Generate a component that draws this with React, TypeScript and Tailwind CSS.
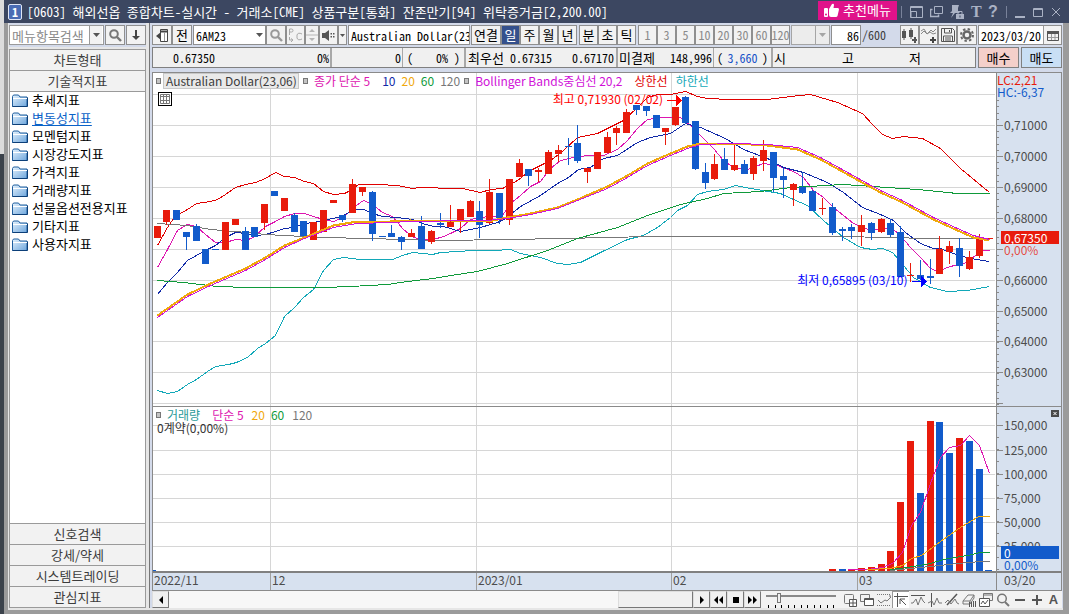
import { ReactNode } from "react";
import clsx from "clsx";

type Pt = [number, number];
// top, bottom, high, low, rising
type Candle = [number, number, number, number, 0 | 1];

const RED = "#e81b0c";
const BLUE = "#125bcb";

const candles: Candle[] = [
  [226, 238, 226, 238, 1], [210, 222, 210, 225, 1], [210, 220, 210, 220, 0], [232, 237, 232, 250, 0],
  [226, 241, 224, 241, 0], [249, 264, 249, 264, 0], [249, 250, 249, 250, 0], [222, 250, 222, 250, 1],
  [219, 225, 219, 225, 1], [231, 250, 227, 250, 0], [227, 237, 227, 237, 0], [204, 223, 204, 230, 1],
  [191, 196, 191, 196, 0], [198, 211, 198, 211, 1], [215, 232, 213, 232, 0], [221, 236, 221, 236, 0],
  [222, 240, 222, 240, 1], [210, 232, 210, 232, 1], [200, 203, 200, 203, 1], [215, 220, 215, 222, 0],
  [184, 213, 179, 213, 1], [187, 192, 187, 196, 1], [192, 234, 191, 241, 0], [236, 237, 236, 237, 0],
  [233, 237, 225, 237, 0], [237, 242, 236, 250, 0], [233, 237, 229, 237, 1], [226, 249, 216, 249, 0],
  [231, 242, 230, 244, 1], [223, 225, 213, 228, 0], [222, 227, 205, 227, 1], [209, 222, 209, 233, 1],
  [201, 217, 200, 217, 1], [211, 225, 201, 238, 0], [192, 223, 179, 224, 1], [193, 218, 193, 224, 0],
  [179, 220, 179, 225, 1], [163, 177, 159, 177, 1], [169, 176, 169, 186, 0], [170, 172, 168, 182, 1],
  [152, 174, 150, 174, 1], [150, 154, 145, 162, 1], [146, 147, 138, 165, 0], [143, 161, 125, 163, 0],
  [168, 172, 168, 183, 1], [152, 169, 152, 169, 1], [137, 153, 132, 153, 1], [128, 133, 126, 145, 1],
  [112, 133, 109, 133, 1], [105, 110, 105, 115, 0], [106, 111, 106, 116, 0], [115, 128, 115, 128, 0],
  [128, 132, 128, 145, 1], [107, 125, 107, 126, 1], [97, 123, 96, 124, 0], [121, 169, 121, 170, 0],
  [172, 183, 163, 189, 0], [164, 179, 154, 180, 1], [159, 170, 148, 170, 0], [165, 170, 143, 171, 1],
  [164, 174, 160, 174, 0], [158, 174, 156, 180, 1], [150, 161, 140, 171, 1], [152, 178, 152, 192, 0],
  [176, 180, 168, 198, 0], [184, 190, 183, 206, 1], [187, 193, 172, 194, 0], [191, 211, 190, 211, 0],
  [208, 209, 198, 215, 1], [207, 233, 203, 235, 0], [229, 231, 227, 241, 0], [227, 231, 224, 239, 0],
  [225, 232, 215, 246, 1], [223, 233, 222, 240, 0], [219, 232, 218, 233, 1], [223, 235, 219, 237, 0],
  [232, 277, 226, 277, 0], [275, 276, 263, 282, 1], [275, 279, 260, 280, 0], [276, 278, 259, 284, 0],
  [249, 274, 236, 274, 1], [246, 252, 241, 264, 1], [248, 266, 238, 277, 0], [257, 269, 251, 270, 1],
  [238, 256, 234, 258, 1],
];

const volumeStart = 69;
const volumes: [number, 0 | 1][] = [
  [569, 1], [569, 0], [570, 1], [568, 1], [567, 1], [564, 1], [551, 1], [502, 1], [441, 1], [493, 0],
  [421, 1], [422, 0], [453, 0], [438, 1], [441, 0], [469, 0], [570, 0],
];

const upperBand: Pt[] = [[157, 245], [167, 227], [173, 218], [180, 213], [187, 209], [196, 203], [210, 201], [217, 199], [225, 194], [235, 187], [245, 184], [255, 182], [265, 178], [275, 172], [284, 176], [294, 177], [304, 181], [313, 183], [323, 191], [333, 194], [344, 193], [350, 190], [358, 184], [377, 184], [397, 185], [412, 188], [420, 187], [435, 187], [440, 188], [462, 188], [480, 192], [490, 189], [502, 188], [517, 180], [530, 170], [550, 160], [562, 151], [577, 137], [597, 133], [613, 125], [623, 120], [637, 107], [647, 97], [657, 94], [670, 94], [685, 91], [697, 96], [707, 98], [730, 99], [767, 99], [790, 96], [810, 94], [837, 102], [862, 113], [873, 125], [882, 134], [892, 138], [903, 136], [922, 138], [940, 148], [960, 168], [989, 192]];
const ma5: Pt[] = [[157, 267], [167, 249], [177, 230], [187, 224], [196, 226], [205, 234], [215, 242], [225, 242], [235, 239], [245, 240], [253, 237], [265, 226], [275, 221], [284, 216], [294, 213], [304, 213], [313, 216], [323, 219], [333, 221], [343, 217], [353, 207], [363, 200], [372, 204], [382, 212], [392, 216], [403, 229], [413, 237], [423, 239], [433, 239], [443, 236], [450, 233], [460, 228], [470, 219], [480, 217], [490, 216], [502, 215], [510, 203], [520, 195], [530, 186], [540, 181], [550, 168], [560, 160], [573, 157], [587, 155], [603, 155], [617, 149], [627, 140], [637, 128], [647, 119], [660, 117], [680, 117], [690, 125], [700, 135], [707, 142], [713, 148], [723, 160], [733, 167], [747, 169], [763, 163], [777, 165], [793, 171], [803, 177], [813, 190], [823, 197], [833, 207], [843, 215], [853, 223], [863, 227], [870, 230], [880, 228], [893, 229], [900, 235], [910, 247], [920, 257], [930, 268], [937, 271], [947, 267], [957, 264], [967, 262], [977, 253], [983, 250], [989, 250]];
const ma10: Pt[] = [[157, 294], [167, 282], [177, 272], [187, 260], [196, 255], [207, 249], [215, 245], [225, 237], [235, 232], [245, 233], [257, 235], [265, 234], [275, 231], [284, 228], [294, 227], [304, 223], [313, 222], [327, 219], [337, 217], [345, 214], [353, 209], [363, 209], [372, 213], [382, 216], [397, 217], [412, 219], [422, 223], [433, 226], [443, 226], [460, 231], [480, 227], [497, 222], [505, 218], [520, 206], [540, 195], [557, 183], [568, 177], [578, 169], [590, 167], [603, 158], [617, 155], [637, 142], [650, 137], [670, 133], [685, 123], [700, 127], [725, 138], [743, 149], [767, 158], [783, 167], [803, 172], [827, 182], [843, 192], [862, 207], [880, 214], [893, 220], [905, 232], [920, 243], [933, 248], [940, 248], [953, 253], [970, 258], [989, 261]];
const ma20: Pt[] = [[157, 315], [187, 294], [210, 283], [245, 268], [265, 257], [284, 245], [304, 237], [333, 225], [357, 221], [390, 221], [410, 220], [430, 221], [450, 220], [487, 221], [507, 217], [530, 213], [557, 207], [577, 199], [607, 186], [627, 175], [647, 163], [670, 153], [687, 146], [700, 143], [733, 143], [767, 145], [797, 149], [820, 159], [840, 170], [867, 185], [882, 193], [900, 201], [933, 219], [957, 230], [973, 237], [989, 240]];
const midBand: Pt[] = [[157, 317], [187, 296], [210, 285], [245, 270], [265, 259], [284, 247], [304, 238], [333, 227], [357, 223], [390, 222], [410, 221], [430, 221], [450, 220], [487, 220], [507, 218], [530, 214], [557, 208], [577, 200], [607, 188], [627, 177], [647, 165], [670, 155], [687, 148], [700, 144], [733, 143], [767, 144], [797, 147], [820, 157], [840, 168], [867, 183], [882, 191], [900, 199], [933, 217], [957, 228], [973, 235], [989, 239]];
const ma60: Pt[] = [[157, 280], [183, 282], [217, 286], [247, 287], [323, 287], [350, 286], [387, 284], [407, 281], [433, 278], [450, 275], [477, 271], [507, 263], [547, 250], [577, 238], [617, 227], [647, 215], [680, 204], [707, 198], [723, 193], [760, 191], [790, 187], [843, 184], [887, 187], [917, 189], [957, 193], [989, 193]];
const ma120: Pt[] = [[157, 223], [187, 225], [210, 229], [235, 231], [265, 234], [284, 235], [320, 237], [370, 238], [400, 239], [440, 240], [507, 239], [563, 238], [607, 237], [650, 236], [827, 236], [900, 237], [917, 238], [989, 238]];
const lowerBand: Pt[] = [[157, 390], [167, 393], [177, 391], [187, 384], [196, 379], [207, 371], [215, 366], [228, 364], [236, 362], [247, 357], [257, 348], [265, 343], [275, 335], [284, 316], [294, 307], [303, 297], [313, 289], [323, 270], [333, 259], [343, 257], [360, 259], [392, 259], [402, 255], [412, 252], [432, 254], [440, 252], [473, 250], [493, 250], [510, 249], [520, 253], [540, 257], [557, 263], [568, 264], [580, 262], [600, 252], [627, 239], [643, 235], [657, 227], [670, 217], [677, 210], [687, 205], [697, 194], [707, 191], [723, 189], [735, 185], [750, 188], [780, 193], [793, 199], [807, 205], [823, 220], [843, 237], [860, 247], [872, 249], [882, 248], [892, 252], [903, 265], [913, 277], [930, 287], [947, 291], [967, 290], [989, 286]];

const volMa5: Pt[] = [[847, 569], [867, 569], [882, 567], [892, 563], [902, 552], [911, 525], [920, 512], [930, 483], [940, 457], [949, 447], [960, 445], [969, 435], [979, 445], [989, 473]];
const volMa20: Pt[] = [[867, 569], [890, 568], [902, 565], [911, 558], [921, 555], [932, 547], [940, 541], [960, 527], [978, 516], [989, 516]];
const volMa60: Pt[] = [[890, 569], [907, 567], [930, 563], [943, 559], [967, 555], [980, 552], [989, 552]];
const volMa120: Pt[] = [[890, 570], [930, 566], [957, 563], [980, 561], [989, 561]];

const monthLines = [270, 476, 671, 857];
const priceGrid = [94, 125, 156, 187, 218, 249, 280, 311, 341, 372, 403];
const volumeGrid = [425, 450, 474, 498, 522, 546];

const priceLabels: [string, number][] = [
  ["0,71000", 125], ["0,70000", 156], ["0,69000", 187], ["0,68000", 218],
  ["0,66000", 280], ["0,65000", 311], ["0,64000", 341], ["0,63000", 372],
];
const volumeLabels: [string, number][] = [
  ["150,000", 425], ["125,000", 450], ["100,000", 474], ["75,000", 498], ["50,000", 522], ["25,000", 546],
];

const slot = (i: number) => Math.floor(154 + i * 9.786);

function Line({ pts, color, width = 1 }: { pts: Pt[]; color: string; width?: number }) {
  return (
    <polyline
      points={pts.map(([x, y]) => `${x + 0.5},${y + 0.5}`).join(" ")}
      fill="none"
      stroke={color}
      strokeWidth={width}
    />
  );
}

function PricePlot() {
  return (
    <svg viewBox="153 73 843 333" preserveAspectRatio="none" className="block h-full w-full" shapeRendering="crispEdges" aria-label="가격 차트">
      {priceGrid.map((y) => <rect key={y} x={153} y={y} width={842} height={1} fill="#d6d6d6" />)}
      {monthLines.map((x) => <rect key={x} x={x} y={73} width={1} height={333} fill="#d6d6d6" />)}
      <Line pts={upperBand} color="#e00000" />
      <Line pts={lowerBand} color="#12a8b8" />
      <Line pts={ma5} color="#dd16b0" />
      <Line pts={ma10} color="#1029a8" />
      <Line pts={ma120} color="#777777" />
      <Line pts={ma60} color="#0f9a3a" />
      {candles.map(([top, bottom, high, low, up], i) => (
        <g key={i} fill={up ? RED : BLUE}>
          <rect x={slot(i)} y={top} width={7} height={bottom - top} />
          <rect x={slot(i) + 3} y={high} width={1} height={low - high} />
        </g>
      ))}
      <rect x={983} y={238} width={10} height={1} fill={RED} />
      <Line pts={ma20} color="#f0a80c" width={2} />
      <Line pts={midBand} color="#d010d8" />
      <path d="M667 100h9v-5l6 5.500-6 5.500v-5h-9z" fill="#ff0000" />
      <path d="M912 281h9v-5l6 5.500-6 5.500v-5h-9z" fill="#0000ff" />
    </svg>
  );
}

function VolumePlot() {
  return (
    <svg viewBox="153 407 843 164" preserveAspectRatio="none" className="block h-full w-full" shapeRendering="crispEdges" aria-label="거래량 차트">
      {volumeGrid.map((y) => <rect key={y} x={153} y={y} width={842} height={1} fill="#d6d6d6" />)}
      {monthLines.map((x) => <rect key={x} x={x} y={407} width={1} height={164} fill="#d6d6d6" />)}
      <rect x={153} y={570} width={3} height={1} fill={BLUE} />
      {volumes.map(([top, up], i) => (
        <rect key={i} x={slot(volumeStart + i)} y={top} width={7} height={571 - top} fill={up ? RED : BLUE} />
      ))}
      <Line pts={volMa5} color="#dd16b0" />
      <Line pts={volMa20} color="#f0a80c" />
      <Line pts={volMa60} color="#0f9a3a" />
      <Line pts={volMa120} color="#777777" />
    </svg>
  );
}

function AxisTicks({ from, to, majors, step, parts }: { from: number; to: number; majors: number[]; step: number; parts: number }) {
  const minors: number[] = [];
  for (let y = majors[0] - step; y < to; y += step / parts) {
    if (y > from + 24 || from > 400) minors.push(Math.round(y));
  }
  return (
    <svg viewBox={`0 ${from} 6 ${to - from}`} preserveAspectRatio="none" className="block h-full w-[6px]" shapeRendering="crispEdges">
      {minors.map((y, i) => <rect key={i} x={0} y={y} width={2} height={1} fill="#8a8a8a" />)}
      {majors.map((y) => <rect key={y} x={0} y={y} width={6} height={1} fill="#8a8a8a" />)}
    </svg>
  );
}

function AxisLabels({ labels, from, to }: { labels: [string, number][]; from: number; to: number }) {
  return (
    <>
      {labels.map(([text, y]) => (
        <span
          key={text}
          className="absolute left-[7px] -translate-y-1/2 leading-4 text-[#4c4c4c]"
          style={{ top: `${((y - from) / (to - from)) * 100}%` }}
        >
          {text}
        </span>
      ))}
    </>
  );
}

function ToolButton({ children, className, label, active }: { children: ReactNode; className?: string; label?: string; active?: boolean }) {
  return (
    <button
      aria-label={label}
      title={label}
      className={clsx(
        "flex h-5 shrink-0 items-center justify-center overflow-hidden border border-[#8f8f8f] leading-4",
        active ? "bg-[#34508c] text-white" : "bg-[#f2f2f2]",
        className
      )}
    >
      {children}
    </button>
  );
}

function Caret({ className = "fill-[#555]" }: { className?: string }) {
  return (
    <svg viewBox="0 0 7 4" className={clsx("h-1 w-[7px] shrink-0", className)}>
      <path d="M0 0h7L3.500 4z" />
    </svg>
  );
}

function Magnifier({ color }: { color: string }) {
  return (
    <svg viewBox="0 0 13 13" className="h-[13px] w-[13px]" fill="none" stroke={color} strokeWidth="2">
      <circle cx="5" cy="5" r="3.800" />
      <path d="M8 8l4 4" strokeWidth="2.400" />
    </svg>
  );
}

function Folder() {
  return (
    <svg viewBox="0 0 16 13" className="h-[13px] w-4 shrink-0">
      <defs>
        <linearGradient id="folder" x1="0" y1="0" x2="1" y2="1">
          <stop offset="0" stopColor="#e4f2fd" />
          <stop offset="1" stopColor="#6ea6dc" />
        </linearGradient>
      </defs>
      <path d="M.5 12.500v-10l1-1.500h5l1.500 2h7v9.500z" fill="url(#folder)" stroke="#1f5e9e" />
      <path d="M1 4.500h14" stroke="#fff" />
      <path d="M.5 12.500h15v-9" fill="none" stroke="#0c3f78" />
    </svg>
  );
}

const indicators = ["추세지표", "변동성지표", "모멘텀지표", "시장강도지표", "가격지표", "거래량지표", "선물옵션전용지표", "기타지표", "사용자지표"];

function TitleBar() {
  return (
    <header className="flex h-[23px] shrink-0 items-center bg-[#3c4761] pr-2 pl-1 font-['Noto_Sans_Mono_CJK_KR','Noto_Sans_CJK_KR',monospace] text-white">
      <span className="flex h-4 w-[14px] items-center justify-center rounded-xs border border-[#dfe6f5] bg-[#4a6cb4] text-[12px] font-bold">1</span>
      <h1 className="ml-[5px] flex-1 truncate leading-5 whitespace-pre">
        [0603] 해외선옵 종합차트-실시간 - 거래소[CME] 상품구분[통화] 잔존만기[94] 위탁증거금[2,200.00]
      </h1>
      <button className="mb-[3px] flex h-[19px] w-[79px] items-center justify-center gap-1 bg-[#e0128a] leading-4">
        <svg viewBox="0 0 15 14" className="h-[14px] w-[15px]" fill="#fff">
          <rect x="0" y="5" width="4" height="9" rx="1" />
          <path d="M5 6l3-5q2-1 2 1l-.5 3H14q1 0 1 1.500L13.500 13q-.5 1-1.500 1H7q-2 0-2-2z" />
          <circle cx="2" cy="11.500" r="1" fill="#e0128a" />
        </svg>
        추천메뉴
      </button>
      <span className="mx-1 h-3 w-px bg-[#79829a]" />
      <div className="flex items-center gap-[7px] pl-1">
        <button aria-label="창 크기">
          <svg viewBox="0 0 13 12" className="block h-3 w-[13px]" fill="none" stroke="#aab2c4">
            <path d="M.5.500h12v11H.5z" /><path d="M1 5.500h5.500v6H1z" /><path d="M1 1.500h11" />
          </svg>
        </button>
        <button aria-label="창 복사">
          <svg viewBox="0 0 13 12" className="block h-3 w-[13px]" fill="none" stroke="#aab2c4">
            <path d="M4.500.500h8v7h-8z" /><path d="M2.500 3.500h-2v7h8v-2" strokeWidth="1.500" />
          </svg>
        </button>
        <button aria-label="화면 고정">
          <svg viewBox="0 0 14 14" className="block h-[14px] w-[14px]" fill="#aab2c4">
            <path d="M2 0h7L8 3v3l2 2H5l-4 5 2-5H0l2-2V3z" />
            <path d="M6 9h8v5H6z" /><path d="M8 9V6.500h4V9" fill="none" stroke="#aab2c4" />
            <path d="M9.500 10.500h1v2h-1z" fill="#3c4761" />
          </svg>
        </button>
        <button aria-label="글꼴" className="w-[10px] font-['Liberation_Serif',serif] text-[16px] leading-4 font-bold text-[#aab2c4]">T</button>
        <button aria-label="도움말" className="w-[10px] font-['Liberation_Sans',sans-serif] text-[16px] leading-4 font-bold text-[#aab2c4]">?</button>
      </div>
      <span className="mx-2 h-3 w-px bg-[#79829a]" />
      <div className="flex items-center gap-2">
        <button aria-label="최소화">
          <svg viewBox="0 0 10 12" className="block h-3 w-[10px]" fill="#aab2c4"><path d="M0 10h10v2H0z" /></svg>
        </button>
        <button aria-label="최대화">
          <svg viewBox="0 0 10 12" className="block h-3 w-[10px]" fill="none" stroke="#aab2c4"><path d="M.5 2.500h9v8h-9z" /><path d="M0 3.500h10" /></svg>
        </button>
        <button aria-label="닫기">
          <svg viewBox="0 0 10 12" className="block h-3 w-[10px]" fill="none" stroke="#aab2c4"><path d="M1 2l8 8M9 2l-8 8" /></svg>
        </button>
      </div>
    </header>
  );
}

function Sidebar() {
  const head = "h-[21px] w-full border-b border-[#9a9a9a] bg-[#f2f2f2] text-center leading-5 text-[#3c3c3c]";
  return (
    <aside className="flex w-[140px] shrink-0 flex-col pr-[3px]">
      <div className="flex h-6 shrink-0 items-center gap-px bg-[#d3daea]">
        <div className="flex h-5 min-w-0 flex-1 items-center border border-[#9a9a9a] bg-white">
          <input aria-label="메뉴항목검색" placeholder="메뉴항목검색" className="h-full w-[79px] pl-[2px] text-[#333] outline-none placeholder:text-[#8a8a8a]" />
          <button aria-label="목록" className="flex h-full w-[13px] items-center justify-center border-l border-[#9a9a9a] bg-[#f2f2f2]"><Caret /></button>
        </div>
        <ToolButton label="검색" className="w-5"><Magnifier color="#777" /></ToolButton>
        <ToolButton label="아래로" className="w-5">
          <svg viewBox="0 0 8 10" className="h-[10px] w-2" fill="#444"><path d="M3 0h2v6h3l-4 4-4-4h3z" /></svg>
        </ToolButton>
      </div>
      <nav className="mt-[2px] flex min-h-0 flex-1 flex-col border border-[#9a9a9a] bg-white">
        <button className={head}>차트형태</button>
        <button className={head}>기술적지표</button>
        <ul className="flex-1 pl-[2px]">
          {indicators.map((name) => (
            <li key={name} className="h-[18px]">
              <a href="#" className={clsx("flex h-4 items-center gap-1 leading-4", name === "변동성지표" ? "text-[#0a62c8]" : "text-black")}>
                <Folder />
                <span className={clsx(name === "변동성지표" && "underline underline-offset-2")}>{name}</span>
              </a>
            </li>
          ))}
        </ul>
        {["신호검색", "강세/약세", "시스템트레이딩", "관심지표"].map((name) => (
          <button key={name} className="h-[21px] w-full border-t border-[#9a9a9a] bg-[#f2f2f2] text-center leading-[18px] text-[#3c3c3c]">{name}</button>
        ))}
      </nav>
    </aside>
  );
}

function Toolbar() {
  return (
    <div className="flex h-6 shrink-0 items-center">
      <ToolButton label="패널 숨기기" className="w-5">
        <svg viewBox="0 0 12 13" className="h-[13px] w-3" fill="none" stroke="#444">
          <path d="M4.500.500h7v12h-7z" fill="#fff" /><path d="M5 2.500h7" strokeWidth="2" /><path d="M8.500 3v9" stroke="#999" />
          <path d="M0 7l5-4v8z" fill="#444" stroke="none" />
        </svg>
      </ToolButton>
      <ToolButton className="mr-px w-5 text-[13px]">전</ToolButton>
      <div className="flex h-5 w-[73px] items-center border border-[#8f8f8f] bg-white">
        <input aria-label="종목코드" defaultValue="6AM23" className="h-full w-[60px] pl-[2px] outline-none" />
        <button aria-label="종목 목록" className="flex h-full flex-1 items-center justify-center"><Caret /></button>
      </div>
      <ToolButton label="종목 검색" className="w-5"><Magnifier color="#999" /></ToolButton>
      <ToolButton label="콜풋" className="w-[19px]">
        <svg viewBox="0 0 15 15" className="h-[15px] w-[15px]" fill="none" stroke="#a8a8a8">
          <path d="M1.500 7V1h2q1.500 0 1.500 1.500T3.500 4h-2M1.500 9v3h3M3 10.500l2 1.500-2 2M14 6q-4-2-5 1v3q1 3 5 1" />
        </svg>
      </ToolButton>
      <ToolButton label="위아래" className="w-[14px]">
        <svg viewBox="0 0 12 18" className="h-[18px] w-3" fill="#b5b5b5">
          <path d="M6 3l3 3H3zM6 15l3-3H3zM0 8.500h12v1H0z" />
        </svg>
      </ToolButton>
      <ToolButton label="소리" className="w-[19px]">
        <svg viewBox="0 0 13 11" className="h-[11px] w-[13px]" fill="#555">
          <path d="M0 3h3l4-3v11L3 8H0z" /><path d="M8.500 3h1.500v1.500H8.500zM8.500 6h1.500v1.500H8.500zM11 3h1.500v1.500H11zM11 6h1.500v1.500H11z" />
        </svg>
      </ToolButton>
      <ToolButton label="소리 설정" className="mr-px w-[9px]">
        <svg viewBox="0 0 5 3" className="h-[3px] w-[5px]" fill="#555"><path d="M0 0h5L2.500 3z" /></svg>
      </ToolButton>
      <input aria-label="종목명" readOnly value="Australian Dollar(23.06)" className="mr-px h-5 w-[122px] min-w-0 border border-[#8f8f8f] bg-white pl-[2px] outline-none" />
      <ToolButton className="w-[30px] text-[13px]">연결</ToolButton>
      <ToolButton className="w-[19px] text-[13px]" active>일</ToolButton>
      {["주", "월", "년"].map((t) => <ToolButton key={t} className="w-[19px] text-[13px]">{t}</ToolButton>)}
      <span className="w-[2px]" />
      {["분", "초", "틱"].map((t) => <ToolButton key={t} className="w-[19px] text-[13px]">{t}</ToolButton>)}
      <span className="w-[2px]" />
      {["1", "3", "5", "10", "20", "30", "60", "120"].map((t) => (
        <ToolButton key={t} className="w-[19px] text-[#8a8a8a]">{t}</ToolButton>
      ))}
      <span className="w-px" />
      <div className="flex h-5 w-[39px] items-center border border-[#a5a5a5] bg-[#ececec]">
        <select aria-label="주기" disabled className="h-full w-6 appearance-none border-r border-[#a5a5a5]" />
        <span className="flex flex-1 justify-center"><Caret className="fill-[#a5a5a5]" /></span>
      </div>
      <input aria-label="봉 개수" defaultValue="86" className="ml-px h-5 w-[30px] border border-[#8f8f8f] bg-white pr-px text-right outline-none" />
      <span className="ml-px text-[#3c3c3c]">/600</span>
      <span className="flex-1" />
      <ToolButton label="차트 추가" className="w-[19px]">
        <svg viewBox="0 0 15 15" className="h-[15px] w-[15px]" fill="#555">
          <path d="M0 3h4v7H0zM1.500 1h1v11h-1zM7 2h4v7H7zM8.500 0h1v11h-1zM10 11h2V9h2v2h1v2h-1v2h-2v-2h-2z" />
        </svg>
      </ToolButton>
      <ToolButton label="지표 추가" className="w-[19px]">
        <svg viewBox="0 0 15 15" className="h-[15px] w-[15px]" fill="none" stroke="#888">
          <path d="M0 3l3-2 3 5 4-4 2 2 3-3M0 6l3-3 3 3 3-2 3 2 3-1" /><path d="M9 12h6M12 9v6" stroke="#444" strokeWidth="2" />
        </svg>
      </ToolButton>
      <ToolButton label="저장" className="w-[19px]">
        <svg viewBox="0 0 14 14" className="h-[14px] w-[14px]" fill="none" stroke="#555">
          <path d="M.5.500h11l2 2v11H.500zM3.500 1v4h7V1M2.500 13V8h9v5M8.500 2v2M4 10h6M4 12h6" />
        </svg>
      </ToolButton>
      <ToolButton label="설정" className="mr-px w-5">
        <svg viewBox="0 0 14 14" className="h-[14px] w-[14px]" fill="none" stroke="#666">
          <circle cx="7" cy="7" r="3.500" strokeWidth="2.500" /><circle cx="7" cy="7" r="6" strokeWidth="2" strokeDasharray="2.400 2.300" />
        </svg>
      </ToolButton>
      <div className="flex h-5 w-[84px] items-center border border-[#8f8f8f] bg-white">
        <input aria-label="날짜" defaultValue="2023/03/20" className="h-full w-[64px] pl-[2px] outline-none" />
        <button aria-label="달력" className="flex h-full flex-1 items-center justify-center border-l border-[#9a9a9a] bg-[#f2f2f2]">
          <svg viewBox="0 0 12 11" className="h-[11px] w-3" fill="none" stroke="#555">
            <path d="M.5 1.500h11v9H.5z" /><path d="M0 2.500h12" strokeWidth="3" /><path d="M1 7.500h10M4.500 4v6M8 4v6" stroke="#999" />
          </svg>
        </button>
      </div>
    </div>
  );
}

function QuoteBar() {
  const cell = "flex h-full shrink-0 items-center border-r border-[#a8a8a8]";
  return (
    <div className="flex h-[21px] shrink-0 items-center gap-[2px]">
      <div className="flex h-full flex-1 items-center overflow-hidden border border-[#808080] bg-[#f0f0f0] whitespace-pre">
        <div className={clsx(cell, "w-[179px] border-r-2 pr-px")}>
          <span className="w-[62px] text-right">0.67350</span>
          <span className="flex-1 text-right">0%</span>
        </div>
        <div className={clsx(cell, "w-[71px] justify-end pr-px")}>0</div>
        <div className={clsx(cell, "w-[63px] justify-between border-r-2 px-1")}><span>(</span><span>0% )</span></div>
        <div className={clsx(cell, "w-[152px] justify-between border-r-2 px-[2px]")}>
          <span className="text-[13px]">최우선</span><span>0.67315</span><span className="pl-[14px]">0.67170</span>
        </div>
        <div className={clsx(cell, "w-[96px] justify-between px-px")}><span className="text-[13px]">미결제</span><span>148,996</span></div>
        <div className={clsx(cell, "w-[59px] justify-between border-r-2 px-[3px]")}><span>(</span><span className="text-[#1450c8]">3,660</span><span>)</span></div>
        <div className="flex flex-1 pl-px text-[13px]"><span className="w-[68px]">시</span><span className="w-[67px]">고</span><span>저</span></div>
      </div>
      <button className="h-full w-[41px] border border-[#808080] bg-[#f4cfca] text-[13px] leading-4">매수</button>
      <button className="h-full w-[41px] border border-[#808080] bg-[#c9dff5] text-[13px] leading-4">매도</button>
    </div>
  );
}

function Marker() {
  return <span className="h-[6px] w-[5px] shrink-0 border border-[#777] bg-[#c4c4c4]" />;
}

function Chart() {
  return (
    <div className="mt-1 flex min-h-0 flex-1 border border-[#8a8a8a] bg-white font-['Noto_Sans_CJK_KR',sans-serif] text-[12px] leading-4">
      <div className="flex min-w-0 flex-1 flex-col">
        <div className="relative min-h-0 flex-[333_1_0%]">
          <PricePlot />
          <div className="absolute top-0 left-[3px] flex h-4 items-center whitespace-nowrap">
            <Marker />
            <span className="ml-[2px] w-[136px] border border-[#c8c8c8] bg-[#e9e9e9] px-[2px] leading-[14px] text-[#3c3c3c]">Australian Dollar(23,06)</span>
            <span className="w-1" /><Marker />
            <span className="ml-[6px] text-[#dd16b0]">종가 단순 5</span>
            <span className="ml-3 text-[#1029a8]">10</span>
            <span className="ml-[6px] text-[#f0a80c]">20</span>
            <span className="ml-[6px] text-[#0f9a3a]">60</span>
            <span className="ml-[6px] text-[#777]">120</span>
            <span className="w-1" /><Marker />
            <span className="ml-[6px] text-[#d010d8]">Bollinger Bands중심선 20,2</span>
            <span className="ml-3 text-[#e00000]">상한선</span>
            <span className="ml-2 text-[#12a8b8]">하한선</span>
          </div>
          <button aria-label="데이터 표" className="absolute top-[19px] left-[5px]">
            <svg viewBox="0 0 14 14" className="block h-[14px] w-[14px]" fill="none" stroke="#777">
              <rect x=".5" y=".5" width="13" height="13" fill="#fff" stroke="#000" />
              <path d="M2.500 2.500h9v9h-9zM5.500 2v10M8.500 2v10M2 4.500h10M2 8.500h10" />
            </svg>
          </button>
          <span className="absolute top-[18px] right-[39.500%] whitespace-nowrap text-[#ff0000]">최고 0,71930 (02/02)</span>
          <span className="absolute top-[199px] right-[10.500%] whitespace-nowrap text-[#0000ff]">최저 0,65895 (03/10)</span>
        </div>
        <div className="relative min-h-0 flex-[164_1_0%] border-t border-[#8a8a8a]">
          <VolumePlot />
          <div className="absolute top-px left-[3px] flex h-[13px] items-center leading-[13px] whitespace-nowrap">
            <Marker />
            <span className="ml-[6px] text-[#2a9a98]">거래량</span>
            <span className="ml-3 text-[#dd16b0]">단순 5</span>
            <span className="ml-2 text-[#f0a80c]">20</span>
            <span className="ml-[6px] text-[#0f9a3a]">60</span>
            <span className="ml-2 text-[#777]">120</span>
          </div>
          <span className="absolute top-[14px] left-1 leading-[13px] text-[#333]">0계약(0,00%)</span>
        </div>
        <div className="grid h-[19px] shrink-0 grid-cols-[117fr_206fr_195fr_186fr_139fr] border-t-2 border-[#808080] bg-[#d7e1ef] leading-[14px] text-[#4c4c4c]">
          {["2022/11", "12", "2023/01", "02", "03"].map((t, i) => (
            <span key={t} className={clsx("pl-px", i > 0 && "border-l border-[#a0a0a0]")}>{t}</span>
          ))}
        </div>
      </div>
      <div className="flex w-[65px] shrink-0 flex-col border-l border-[#8a8a8a] bg-[#d7e1ef]">
        <div className="relative min-h-0 flex-[333_1_0%]">
          <AxisTicks from={73} to={406} majors={priceGrid.slice(1)} step={31} parts={5} />
          <div className="absolute top-px left-0 leading-3">
            <p className="text-[#e81b0c]">LC:2,21</p>
            <p className="text-[#125bcb]">HC:-6,37</p>
          </div>
          <AxisLabels labels={priceLabels} from={73} to={406} />
          <span className="absolute top-[170px] left-[7px] leading-[13px] text-[#e81b0c]/80">0,00%</span>
          <span className="absolute top-[158px] right-[2px] left-1 h-[13px] bg-[#e81b0c] pl-[3px] leading-[13px] text-white">0,67350</span>
        </div>
        <div className="relative min-h-0 flex-[164_1_0%] border-t border-[#8a8a8a]">
          <AxisTicks from={407} to={571} majors={volumeGrid} step={24} parts={2} />
          <AxisLabels labels={volumeLabels} from={407} to={571} />
          <button aria-label="거래량 닫기" className="absolute top-[3px] right-[2px]">
            <svg viewBox="0 0 8 7" className="block h-[7px] w-2" stroke="#fff"><path d="M0 0h8v7H0z" fill="#4a4a4a" stroke="none" /><path d="M2.500 2l3 3M5.500 2l-3 3" /></svg>
          </button>
          <span className="absolute bottom-0 left-[7px] leading-3 text-[#125bcb]">0,00%</span>
          <span className="absolute right-[2px] bottom-3 left-1 h-[13px] bg-[#125bcb] pl-[3px] leading-[13px] text-white">0</span>
        </div>
        <div className="h-[19px] shrink-0 border-t-2 border-[#808080] pl-[7px] leading-[14px] text-[#4c4c4c]">03/20</div>
      </div>
    </div>
  );
}

function IconCell({ label, children, active }: { label: string; children: ReactNode; active?: boolean }) {
  return (
    <button aria-label={label} title={label} className={clsx("flex h-[17px] w-[17px] shrink-0 items-center justify-center", active && "border-t border-l border-[#999] bg-white")}>
      <svg viewBox="0 0 14 14" className="h-[14px] w-[14px]" fill="none" stroke="#777">{children}</svg>
    </button>
  );
}

function BottomBar() {
  const key = "flex h-[17px] w-[17px] shrink-0 items-center justify-center border border-t-[#ddd] border-r-[#777] border-b-[#777] border-l-[#ddd] bg-[#f0f0f0]";
  return (
    <div className="flex h-[17px] shrink-0 items-center bg-[#f2f2f2]">
      <button aria-label="이전" className={key}>
        <svg viewBox="0 0 4 8" className="h-2 w-1"><path d="M4 0v8L0 4z" /></svg>
      </button>
      <div className="flex h-full flex-1 justify-end bg-[#f7f7f7]">
        <span className="h-full w-[75px] border border-t-[#ddd] border-r-[#777] border-b-[#777] border-l-[#ddd] bg-[#f0f0f0]" />
      </div>
      <button aria-label="다음" className={key}>
        <svg viewBox="0 0 4 8" className="h-2 w-1"><path d="M0 0v8l4-4z" /></svg>
      </button>
      <button aria-label="되감기" className={key}>
        <svg viewBox="0 0 9 8" className="h-2 w-[9px]"><path d="M4 0v8L0 4zM9 0v8L5 4z" /></svg>
      </button>
      <button aria-label="정지" className={key}>
        <svg viewBox="0 0 6 6" className="h-[6px] w-[6px]"><path d="M0 0h6v6H0z" /></svg>
      </button>
      <button aria-label="빨리감기" className={key}>
        <svg viewBox="0 0 9 8" className="h-2 w-[9px]"><path d="M0 0v8l4-4zM5 0v8l4-4z" /></svg>
      </button>
      <div className="ml-[5px] flex h-full w-[70px] shrink-0 flex-col justify-between">
        <input
          type="range"
          aria-label="재생 속도"
          min={0}
          max={12}
          defaultValue={2}
          className="mt-[2px] h-[10px] w-full appearance-none bg-[linear-gradient(#888,#888)] bg-[length:100%_2px] bg-[position:0_2px] bg-no-repeat [&::-webkit-slider-thumb]:h-[10px] [&::-webkit-slider-thumb]:w-1 [&::-webkit-slider-thumb]:appearance-none [&::-webkit-slider-thumb]:border [&::-webkit-slider-thumb]:border-[#777] [&::-webkit-slider-thumb]:bg-[#f0f0f0]"
        />
        <svg viewBox="0 0 70 3" className="h-[3px] w-full" fill="#000" shapeRendering="crispEdges">
          {Array.from({ length: 11 }, (_, i) => <rect key={i} x={2 + Math.round(i * 6.5)} y="0" width="1" height="3" />)}
        </svg>
      </div>
      <div className="ml-[5px] flex items-center">
        <IconCell label="창 추가"><rect x="1.500" y="1.500" width="9" height="9" rx="1" /><path d="M6.500 6.500h7v7h-7zM10 7v6M7 10h6" fill="#fff" stroke="#555" /></IconCell>
        <IconCell label="창 겹치기"><path d="M.5 1.500h9v7h-9z" /><path d="M4.500 5.500h9v7h-9z" fill="#fff" stroke="#555" /><path d="M4.500 6.500h9" stroke="#555" /></IconCell>
        <IconCell label="영역 차트"><path d="M0 1.500h14M0 12.500h14" strokeDasharray="1 1" /><path d="M1 7l3 3 4-3 2 1 4-4M12 3h2v2" /></IconCell>
        <IconCell label="십자선" active><path d="M0 3.500h14M3.500 0v14" stroke="#555" /><path d="M6 6l6 6M6 11V6h5" stroke="#555" /></IconCell>
        <IconCell label="수평선"><path d="M0 2.500h14" stroke="#555" /><path d="M0 10h2l3-4 2 6 3-8 2 4 2 2" /></IconCell>
        <IconCell label="수직선"><path d="M3.500 0v14" stroke="#555" /><path d="M0 10l4-2 2 4 3-7 2 5h3" /></IconCell>
        <IconCell label="추세선"><path d="M2 12L12 1" stroke="#555" strokeWidth="1.500" /><path d="M0 10l3-3 3 4 4-5 2 4 2 1" /></IconCell>
        <IconCell label="전체 지우기"><path d="M1 8l5-6h6l-4 6zM1 8v3h7V8M8 11l4-6V2" /><path d="M7.500 9v5M9.500 9v5M11.500 8v6M13.500 8v6" stroke="#555" /></IconCell>
        <IconCell label="차트 복사"><path d="M4.500.500h9v7h-9zM5 2h8" /><path d="M.5 5.500h10v8H.5z" fill="#fff" stroke="#555" /><path d="M2 11l2-3 2 3 3-4" stroke="#555" /></IconCell>
        <IconCell label="돋보기"><circle cx="6" cy="5.500" r="4.300" strokeWidth="1.500" /><path d="M9 9l4 4" strokeWidth="2" /></IconCell>
        <IconCell label="축소"><path d="M2 7h10" stroke="#555" strokeWidth="2" /></IconCell>
        <IconCell label="확대"><path d="M2 7h10M7 2v10" stroke="#555" strokeWidth="2" /></IconCell>
        <button aria-label="자동" className="h-[17px] w-[17px] font-['Liberation_Sans',sans-serif] text-[13px] leading-4 font-bold text-[#555]">A</button>
      </div>
    </div>
  );
}

export default function App() {
  return (
    <div className="flex h-screen min-h-[400px] flex-col bg-[#e4e4e4] font-['Noto_Sans_CJK_KR',sans-serif] text-[13px] text-black">
      <div className="flex min-h-0 flex-1 bg-linear-to-b from-[#dcdcdc] from-25% to-[#3b424b] to-25%">
        <div className="ml-1 flex min-w-0 flex-1 flex-col">
          <TitleBar />
          <div className="flex min-h-0 flex-1 border-r-[6px] border-b-4 border-l-4 border-[#9b9b9b] bg-[#e6e6e6] pb-[2px] pl-px">
            <Sidebar />
            <main className="flex min-w-0 flex-1 flex-col border-l border-[#777] bg-[#d3daea] pr-px pl-[2px] font-['Noto_Sans_Mono_CJK_KR','Noto_Sans_CJK_KR',monospace] text-[12px]">
              <Toolbar />
              <QuoteBar />
              <Chart />
              <BottomBar />
            </main>
          </div>
        </div>
      </div>
    </div>
  );
}
